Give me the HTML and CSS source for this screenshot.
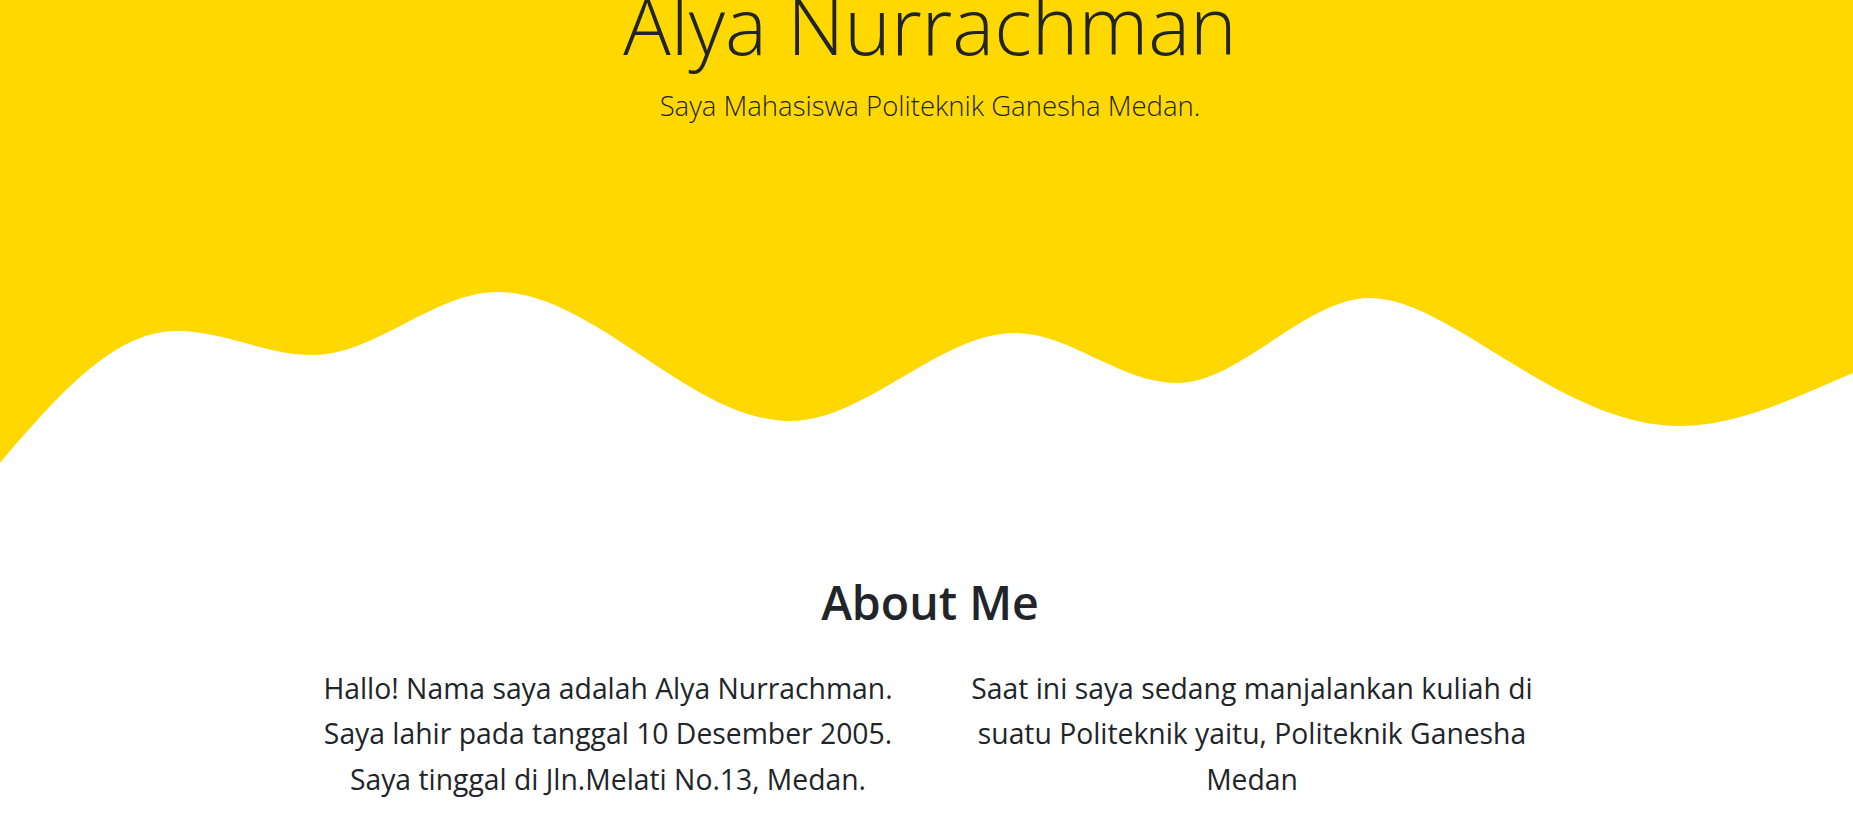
FILE: index.html
```html
<!DOCTYPE html>
<html lang="id">
<head>
<meta charset="utf-8">
<title>Alya Nurrachman</title>
<link rel="stylesheet" href="styles.css">
</head>
<body>
<header class="hero">
  <h1 class="hero-title">Alya Nurrachman</h1>
  <p class="hero-lead">Saya Mahasiswa Politeknik Ganesha Medan.</p>
</header>
<svg class="wave" viewBox="0 0 1853 210" preserveAspectRatio="none" aria-hidden="true">
  <path fill="#ffd800" d="M0,193 C70,110 120,61 177,61 C225,61 265,85 313,85 C375,85 435,22 497,22 C595,22 690,151 790,151 C865,151 940,63 1015,63 C1070,63 1120,113 1177,113 C1240,113 1305,28 1370,28 C1450,28 1560,156 1680,156 C1740,156 1800,125 1853,103 L1853,0 L0,0 Z"/>
</svg>
<section class="about">
  <h2 class="about-title">About Me</h2>
  <div class="about-cols">
    <p class="about-text">Hallo! Nama saya adalah Alya Nurrachman. Saya lahir pada tanggal 10 Desember 2005. Saya tinggal di Jln.Melati No.13, Medan.</p>
    <p class="about-text">Saat ini saya sedang manjalankan kuliah di suatu Politeknik yaitu, Politeknik Ganesha Medan</p>
  </div>
</section>
</body>
</html>
```
FILE: styles.css
```css
html, body {
  margin: 0;
  padding: 0;
  background: #fff;
}
body {
  font-family: "Open Sans", "Noto Sans", sans-serif;
  color: #212529;
  overflow: hidden;
}
.hero {
  background: #ffd800;
  height: 270px;
  padding-left: 7px;
  display: flex;
  flex-direction: column;
  align-items: center;
  text-align: center;
}
.hero-title {
  margin: -15px 0 0;
  font-size: 79px;
  font-weight: 300;
  line-height: 1;
}
.hero-lead {
  margin: 21px 0 0;
  font-size: 27.5px;
  font-weight: 300;
  line-height: 1.5;
}
.wave {
  display: block;
  width: 100%;
  height: 210px;
}
.about {
  padding-left: 7px;
  display: flex;
  flex-direction: column;
  align-items: center;
  text-align: center;
}
.about-title {
  margin: 95px 0 0;
  font-size: 46.5px;
  font-weight: 600;
  line-height: 1.2;
}
.about-cols {
  margin-top: 35px;
  display: grid;
  grid-template-columns: 600px 600px;
  column-gap: 44px;
}
.about-text {
  margin: 0;
  font-size: 28.3px;
  line-height: 45.5px;
}
```
